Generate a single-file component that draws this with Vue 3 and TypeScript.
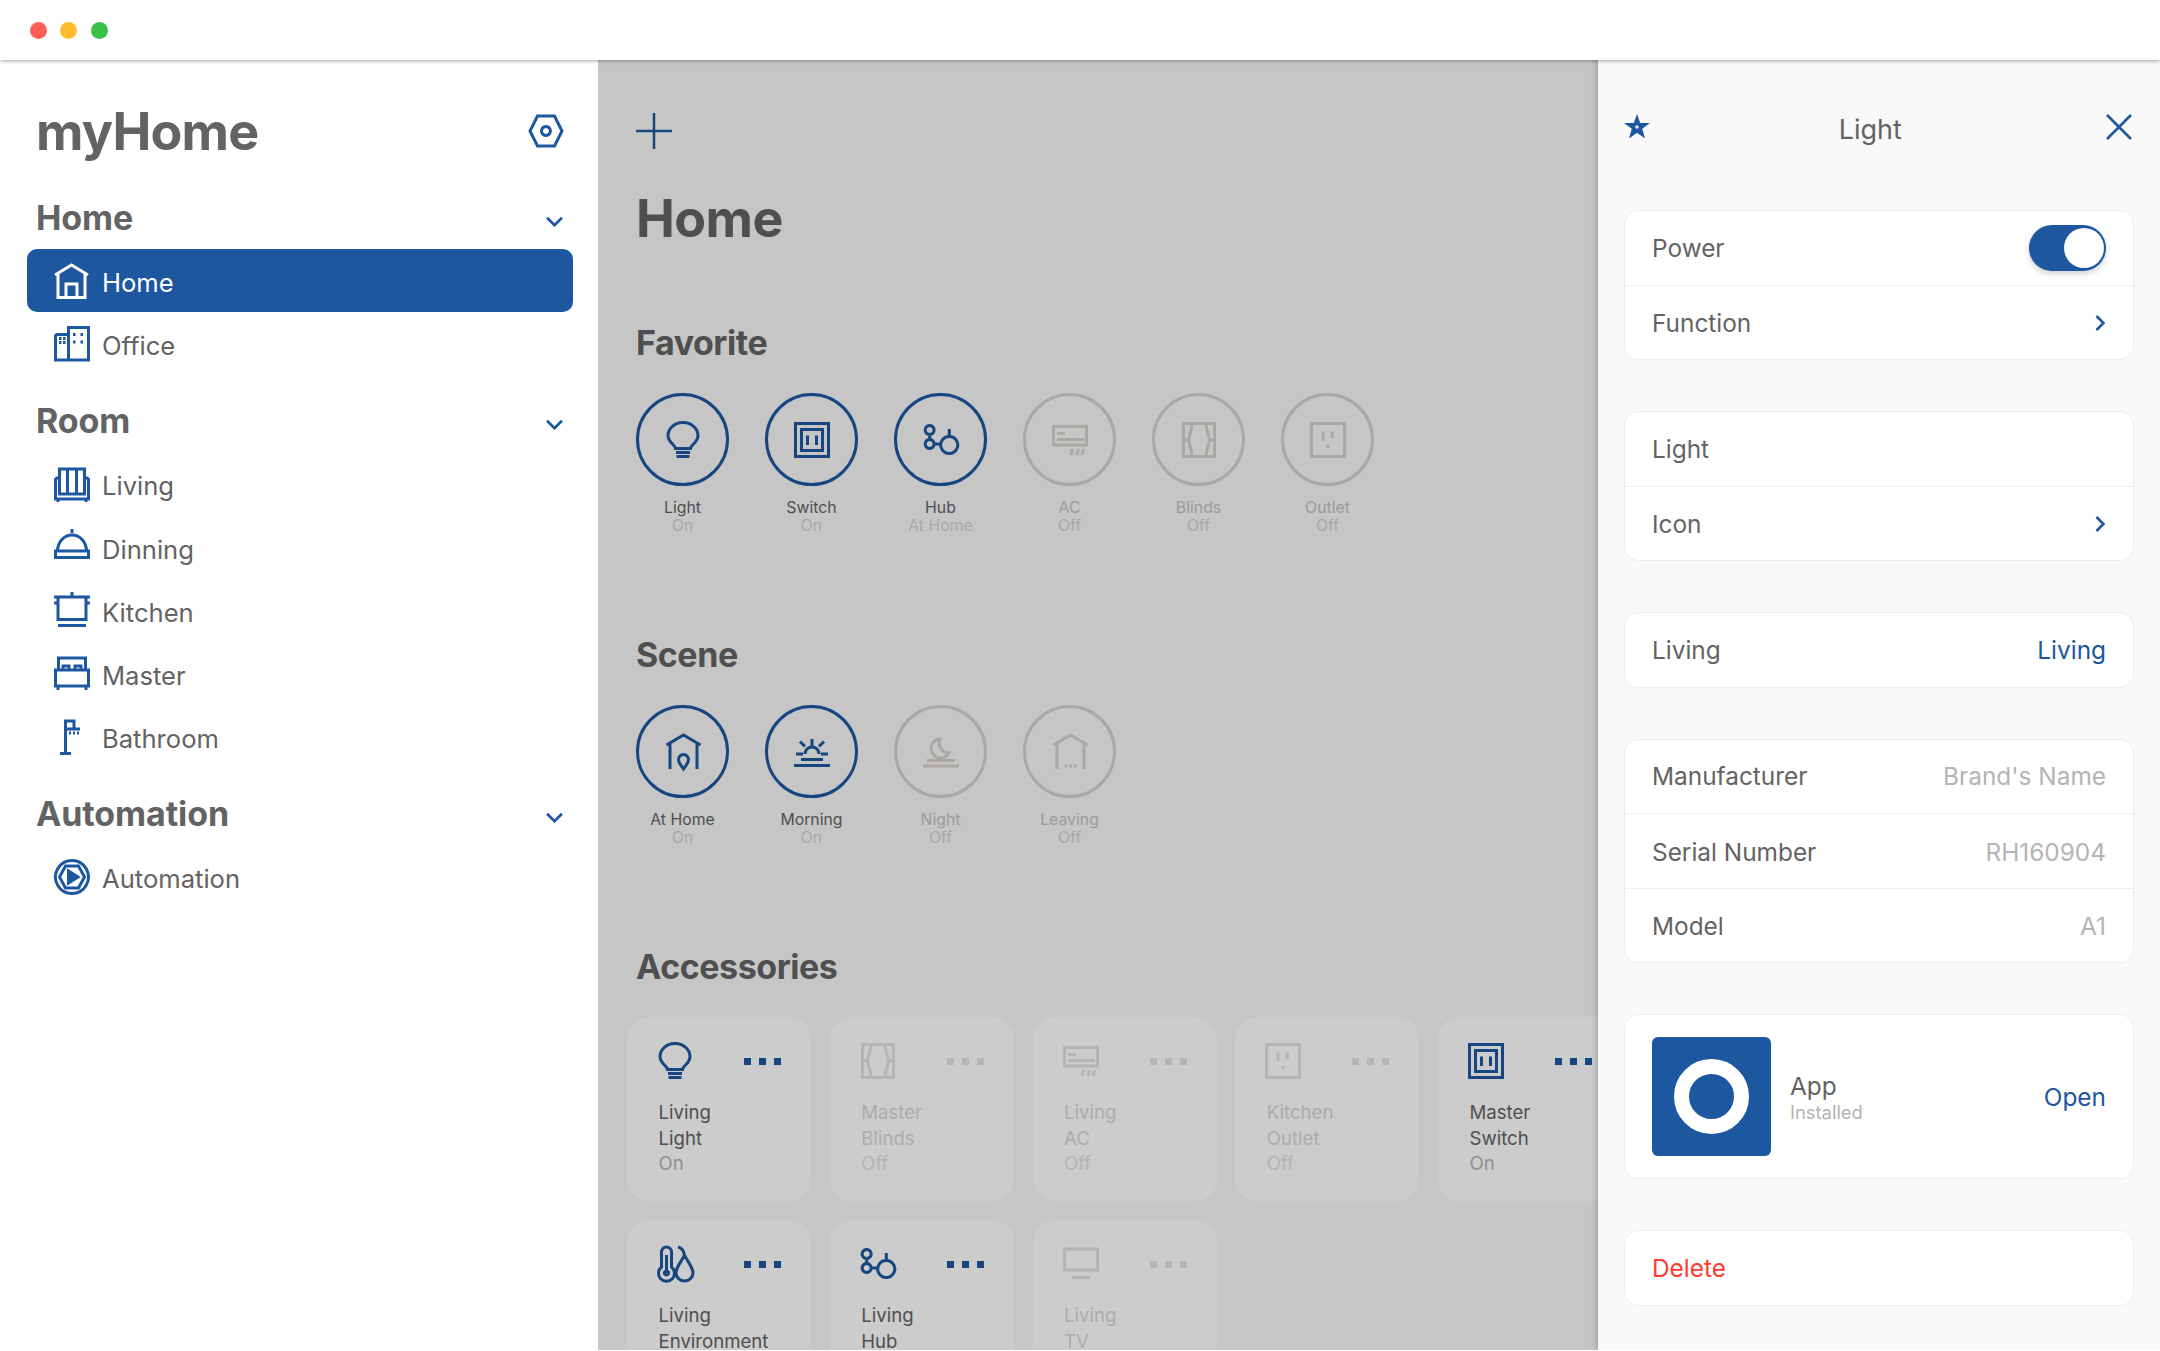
<script setup lang="ts">
import { ref } from 'vue';

// every icon is one stroked path on a 36x36 box
const icons: Record<string, string> = {
  gear: 'M9.5 3H26.5L34 18L26.5 33H9.5L2 18Z M18 13.5A4.5 4.5 0 1 1 17.9 13.5Z',
  home: 'M1 12L17.5 2L34 12 M4 11V34.5H31V11 M12 34.5V21H23V34.5',
  office: 'M1.5 8.5H14.5 M1.5 8.5V34H34.5V1.5H14.5V34 M5 12.5H7.5 M9 12.5H11.5 M5 16.5H7.5 M9 16.5H11.5 M19 8.5H21.5 M26.5 8.5H29 M19 16H21.5 M26.5 16H29',
  living: 'M1.5 12V33H34.5V12 M1.5 12H5.5V28H30.5V12H34.5 M5.5 12V3H30.5V12 M13.5 3V28 M22.5 3V28 M4 33V36 M32 33V36',
  dining: 'M18 0V4 M3.5 22A14.5 16 0 0 1 32.5 22 M1.5 22H34.5V28.5H1.5Z',
  kitchen: 'M18 0V5 M0 5H36 M0 11H3 M33 11H36 M4 5V27.5H32V5 M4 33.5H32',
  master: 'M4.5 14V2H31.5V14 M1.5 14H34.5V30H1.5Z M9 14V10H15V14 M21 14V10H27V14 M4 30V34 M32 30V34',
  bath: 'M6 34.5H17 M11.5 34.5V2H20V10 M13 10H26 M15 14H17 M19 14H21 M23 14H25',
  auto: 'M18 1.5A16.5 16.5 0 1 1 17.9 1.5Z M11.5 7H24.5L30.5 18L24.5 29H11.5L5.5 18Z M14.5 12V24L24 18Z M16 15V21L21 18Z',
  light: 'M10.5 26.5C10 22.5 3 20.5 3 13.5A15 13 0 0 1 33 13.5C33 20.5 26 22.5 25.5 26.5Z M11 30.5H25 M11.5 34.5H24.5',
  switch: 'M1.5 1.5H34.5V34.5H1.5Z M7.5 7.5H28.5V28.5H7.5Z M13.5 13.5V23 M22.5 13.5V23',
  hub: 'M6.7 3.5A4.5 4.5 0 1 1 6.6 3.5Z M6.7 12.5V17.5 M6.7 17.5A4.5 4.5 0 1 1 6.6 17.5Z M11.2 22H17.5 M26.3 14.5A8.5 8.5 0 1 1 26.2 14.5Z M26.3 7V14.5',
  ac: 'M1.5 4.5H34.5V23H1.5Z M5 11.5H13 M5 17.5H32 M19 33L20.5 27 M25 33L26.5 27 M30 33L31.5 27',
  blinds: 'M2.5 1.5H33.5V34.5H2.5Z M11 1.5C11 8 7.5 14 7.5 18C7.5 22 11 28 11 34.5 M25 1.5C25 8 28.5 14 28.5 18C28.5 22 25 28 25 34.5 M2.5 18H7.5 M28.5 18H33.5',
  outlet: 'M1.5 1.5H34.5V34.5H1.5Z M13 9.5V18.5 M22.3 9.5V16 M18 23V26',
  tv: 'M1.5 3H34.5V24H1.5Z M9 31.5H27',
  env: 'M4.5 21V6A5 5 0 0 1 14.5 6V21A8 8 0 1 1 4.5 21Z M9.5 9V27 M9.5 25A2 2 0 1 1 9.4 25Z M21 1C25 2 27 6 27.5 9C30 15 36 21 36 27A8.5 8 0 0 1 19 27C19 21 25 15 27.5 9',
  athome: 'M1.5 11L18.5 1L35.5 11 M5 10V35 M32 10V35 M18.5 20.5A5 5 0 0 1 23.5 25.5C23.5 29 20.5 32 18.5 35C16.5 32 13.5 29 13.5 25.5A5 5 0 0 1 18.5 20.5Z',
  morning: 'M18 5V12 M6 7.5L11 12.5 M30 7.5L25 12.5 M2 20H9 M27 20H34 M11 20A7 7 0 0 1 25 20 M7 25.5H29 M0 31.5H36',
  night: 'M17 5A9.5 9.5 0 1 0 26 19A10 10 0 0 1 17 5Z M4 26.5H32 M0 32H36',
  leaving: 'M1.5 11L18.5 1L35.5 11 M5 10V35 M32 10V35 M13 32H15.5 M17.5 32H20 M22 32H24.5',
};

type Item = { icon: string; label: string; active?: boolean };

const homes: Item[] = [
  { icon: 'home', label: 'Home', active: true },
  { icon: 'office', label: 'Office' },
];
const rooms: Item[] = [
  { icon: 'living', label: 'Living' },
  { icon: 'dining', label: 'Dinning' },
  { icon: 'kitchen', label: 'Kitchen' },
  { icon: 'master', label: 'Master' },
  { icon: 'bath', label: 'Bathroom' },
];

const groups = [
  { title: 'Home', items: homes },
  { title: 'Room', items: rooms },
  { title: 'Automation', items: [{ icon: 'auto', label: 'Automation' }] as Item[] },
];

const favorites = [
  { icon: 'light', name: 'Light', state: 'On', on: true },
  { icon: 'switch', name: 'Switch', state: 'On', on: true },
  { icon: 'hub', name: 'Hub', state: 'At Home', on: true },
  { icon: 'ac', name: 'AC', state: 'Off', on: false },
  { icon: 'blinds', name: 'Blinds', state: 'Off', on: false },
  { icon: 'outlet', name: 'Outlet', state: 'Off', on: false },
];
const scenes = [
  { icon: 'athome', name: 'At Home', state: 'On', on: true },
  { icon: 'morning', name: 'Morning', state: 'On', on: true },
  { icon: 'night', name: 'Night', state: 'Off', on: false },
  { icon: 'leaving', name: 'Leaving', state: 'Off', on: false },
];
const accessories = [
  { icon: 'light', room: 'Living', name: 'Light', state: 'On', on: true },
  { icon: 'blinds', room: 'Master', name: 'Blinds', state: 'Off', on: false },
  { icon: 'ac', room: 'Living', name: 'AC', state: 'Off', on: false },
  { icon: 'outlet', room: 'Kitchen', name: 'Outlet', state: 'Off', on: false },
  { icon: 'switch', room: 'Master', name: 'Switch', state: 'On', on: true },
  { icon: 'env', room: 'Living', name: 'Environment', state: 'On', on: true },
  { icon: 'hub', room: 'Living', name: 'Hub', state: 'On', on: true },
  { icon: 'tv', room: 'Living', name: 'TV', state: 'Off', on: false },
];

const powered = ref(true);
</script>

<template>
  <div class="window">
    <header class="titlebar">
      <span class="dot red"></span>
      <span class="dot yellow"></span>
      <span class="dot green"></span>
    </header>

    <div class="content">
      <aside class="sidebar">
        <div class="brand">
          <h1>myHome</h1>
          <svg class="gear" viewBox="0 0 36 36"><path :d="icons.gear" /></svg>
        </div>
        <section v-for="group in groups" :key="group.title" class="group">
          <div class="group-head">
            <h2>{{ group.title }}</h2>
            <svg class="chev" viewBox="0 0 16 10"><path d="M1 1.5L8 8.5L15 1.5" /></svg>
          </div>
          <ul>
            <li v-for="item in group.items" :key="item.label" :class="{ active: item.active }">
              <svg class="icon" viewBox="0 0 36 36"><path :d="icons[item.icon]" /></svg>
              <span>{{ item.label }}</span>
            </li>
          </ul>
        </section>
      </aside>

      <main class="main">
        <svg class="plus" viewBox="0 0 36 36"><path d="M18 0V36 M0 18H36" /></svg>
        <h1>Home</h1>

        <h2 class="fav-title">Favorite</h2>
        <div class="rounds">
          <div v-for="f in favorites" :key="f.name" class="round-item" :class="{ off: !f.on }">
            <div class="round">
              <svg class="icon" viewBox="0 0 36 36"><path :d="icons[f.icon]" /></svg>
            </div>
            <div class="round-name">{{ f.name }}</div>
            <div class="round-state">{{ f.state }}</div>
          </div>
        </div>

        <h2>Scene</h2>
        <div class="rounds">
          <div v-for="s in scenes" :key="s.name" class="round-item" :class="{ off: !s.on }">
            <div class="round">
              <svg class="icon" viewBox="0 0 36 36"><path :d="icons[s.icon]" /></svg>
            </div>
            <div class="round-name">{{ s.name }}</div>
            <div class="round-state">{{ s.state }}</div>
          </div>
        </div>

        <h2>Accessories</h2>
        <div class="cards">
          <div v-for="a in accessories" :key="a.room + a.name" class="card" :class="{ off: !a.on }">
            <div class="card-top">
              <svg class="icon" viewBox="0 0 36 36"><path :d="icons[a.icon]" /></svg>
              <div class="more"><i></i><i></i><i></i></div>
            </div>
            <div class="card-name">{{ a.room }}<br />{{ a.name }}</div>
            <div class="card-state">{{ a.state }}</div>
          </div>
        </div>
        <div class="scrim"></div>
      </main>

      <aside class="panel">
        <div class="panel-head">
          <svg class="star" viewBox="0 0 26 25">
            <path d="M13 0L16.2 8.9H26L18.2 14.7L21 24.5L13 18.8L5 24.5L7.8 14.7L0 8.9H9.8Z" />
            <circle cx="13" cy="13" r="1.8" />
          </svg>
          <span>Light</span>
          <svg class="close" viewBox="0 0 26 26"><path d="M1 1L25 25 M25 1L1 25" /></svg>
        </div>

        <div class="box">
          <div class="row">
            <span>Power</span>
            <div class="toggle" :class="{ on: powered }"><b></b></div>
          </div>
          <div class="row">
            <span>Function</span>
            <svg class="arrow" viewBox="0 0 10 16"><path d="M1.5 1L8.5 8L1.5 15" /></svg>
          </div>
        </div>

        <div class="box">
          <div class="row"><span>Light</span></div>
          <div class="row">
            <span>Icon</span>
            <svg class="arrow" viewBox="0 0 10 16"><path d="M1.5 1L8.5 8L1.5 15" /></svg>
          </div>
        </div>

        <div class="box">
          <div class="row"><span>Living</span><em class="link">Living</em></div>
        </div>

        <div class="box">
          <div class="row"><span>Manufacturer</span><em>Brand's Name</em></div>
          <div class="row"><span>Serial Number</span><em>RH160904</em></div>
          <div class="row"><span>Model</span><em>A1</em></div>
        </div>

        <div class="box app">
          <div class="app-icon"><div class="app-ring"></div></div>
          <div class="app-text">
            <div class="app-name">App</div>
            <div class="app-state">Installed</div>
          </div>
          <em class="link">Open</em>
        </div>

        <div class="box">
          <div class="row delete"><span>Delete</span></div>
        </div>
      </aside>
    </div>
  </div>
</template>

<style>
html,
body {
  background: #fff;
}
</style>

<style scoped>
.window {
  height: 1350px;
  display: flex;
  flex-direction: column;
  font-family: Inter, 'Noto Sans', sans-serif;
  color: #636363;
  overflow: hidden;
}

svg path {
  fill: none;
  stroke-linejoin: miter;
}

.titlebar {
  height: 60px;
  flex: none;
  display: flex;
  align-items: center;
  gap: 13.4px;
  padding-left: 30px;
  background: #fff;
  box-shadow: 0 1px 4px rgba(0, 0, 0, 0.35);
  position: relative;
  z-index: 3;
}

.dot {
  width: 17px;
  height: 17px;
  border-radius: 50%;
}
.red { background: #ff5f57; }
.yellow { background: #febc2e; }
.green { background: #38c149; }

.content {
  flex: 1;
  display: flex;
  min-height: 0;
}

/* sidebar */
.sidebar {
  width: 598px;
  flex: none;
  padding: 35px 25px 0 27px;
  box-sizing: border-box;
  background: #fff;
}

.brand {
  display: flex;
  align-items: center;
  justify-content: space-between;
  height: 72px;
  padding: 0 9px;
  margin-bottom: 29px;
}

.brand h1 {
  margin: 0;
  font-size: 52px;
  font-weight: 700;
  letter-spacing: -0.8px;
}

.gear {
  width: 36px;
  height: 36px;
}
.gear path {
  stroke: #1c57a0;
  stroke-width: 3;
}

.group + .group {
  margin-top: 24px;
}

.group-head {
  display: flex;
  align-items: center;
  justify-content: space-between;
  height: 44px;
  padding: 0 10px 0 9px;
  margin-bottom: 9px;
}

.group-head h2 {
  margin: -2px 0 0;
  font-size: 34px;
  font-weight: 700;
  letter-spacing: -0.1px;
}

.chev {
  width: 17px;
  height: 11px;
  margin-top: 6px;
}
.chev path {
  stroke: #1c57a0;
  stroke-width: 2.5;
}

ul {
  list-style: none;
  margin: 0;
  padding: 0;
}

li {
  height: 63.2px;
  display: flex;
  align-items: center;
  gap: 12px;
  padding-left: 27px;
  font-size: 25.6px;
  border-radius: 10px;
}

li span {
  margin-top: 4px;
}

li .icon path {
  stroke: #1c57a0;
}

li.active {
  background: #1c57a0;
  color: #fff;
}
li.active .icon path {
  stroke: #fff;
}

.icon {
  width: 36px;
  height: 36px;
  flex: none;
  overflow: visible;
}
.icon path {
  stroke-width: 3;
}

/* main, sits under the scrim of the open panel */
.main {
  flex: 1;
  min-width: 0;
  position: relative;
  overflow: hidden;
  padding: 53px 0 0 38px;
  background: #f8f8f8;
  color: #636363;
}

.plus {
  display: block;
  width: 36px;
  height: 36px;
}
.plus path {
  stroke: #1c57a0;
  stroke-width: 2.5;
}

.main h1 {
  margin: 45px 0 0;
  height: 50px;
  line-height: 50px;
  font-size: 52px;
  font-weight: 700;
  letter-spacing: -0.6px;
}

.main h2 {
  margin: 104px 0 34px;
  height: 32px;
  line-height: 32px;
  font-size: 34px;
  font-weight: 700;
  letter-spacing: -0.45px;
}

.main h2.fav-title {
  margin-top: 83px;
}

.rounds {
  display: flex;
  gap: 36px;
}

.round-item {
  width: 93px;
  text-align: center;
  white-space: nowrap;
  font-size: 15.8px;
  line-height: 18px;
}

.round {
  width: 93px;
  height: 93px;
  box-sizing: border-box;
  border: 3px solid #1c57a0;
  border-radius: 50%;
  display: flex;
  align-items: center;
  justify-content: center;
  margin-bottom: 13px;
}

.round .icon path {
  stroke: #1c57a0;
}

.round-state {
  color: #d2d2d2;
}

.round-item.off .round {
  border-color: #d6d2ce;
}
.round-item.off .icon path {
  stroke: #d6d2ce;
}
.round-item.off .round-name {
  color: #c2c2c2;
}

.cards {
  display: grid;
  grid-template-columns: repeat(5, 184px);
  grid-auto-rows: 184px;
  column-gap: 18.75px;
  row-gap: 19px;
  margin-left: -9px;
}

.card {
  background: #fff;
  border-radius: 22px;
  padding: 26px 0 0 30px;
  box-sizing: border-box;
}

.card-top {
  display: flex;
  align-items: center;
  justify-content: space-between;
  padding-right: 30px;
  height: 36px;
}

.card .icon path {
  stroke: #1c57a0;
}

.more {
  display: flex;
  gap: 8px;
}
.more i {
  width: 7px;
  height: 7px;
  background: #1c57a0;
}

.card-name,
.card-state {
  padding-left: 1.5px;
  font-size: 18.6px;
  line-height: 25.5px;
}

.card-name {
  margin-top: 21px;
}

.card-state {
  color: #b4b4b4;
}

.card.off .icon path {
  stroke: #e3e3e3;
}
.card.off .more i {
  background: #e3e3e3;
}
.card.off .card-name {
  color: #d8d8d8;
}
.card.off .card-state {
  color: #e3e3e3;
}

.scrim {
  position: absolute;
  inset: 0;
  background: rgba(0, 0, 0, 0.2);
}

/* detail panel */
.panel {
  width: 562px;
  flex: none;
  box-sizing: border-box;
  padding: 38px 26px 0;
  background: #f9f9f9;
  box-shadow: -2px 0 6px rgba(0, 0, 0, 0.2);
  position: relative;
  z-index: 2;
}

.panel-head {
  height: 60px;
  display: flex;
  align-items: center;
  justify-content: space-between;
  font-size: 27px;
  margin-bottom: 52px;
}

.panel-head span {
  margin: 2px 16px 0 0;
}

.star {
  width: 26px;
  height: 25px;
  margin-top: -3px;
}
.star path,
.star circle {
  fill: #1c57a0;
  stroke: none;
}
.star circle {
  fill: #dfe8f2;
}

.close {
  width: 26px;
  height: 26px;
  margin: -3px 1.5px 0 0;
}
.close path {
  stroke: #1c57a0;
  stroke-width: 2.6;
}

.box {
  background: #fff;
  border: 1px solid #eeeeee;
  border-radius: 14px;
  margin-bottom: 51px;
}

.row {
  height: 73.5px;
  display: flex;
  align-items: center;
  justify-content: space-between;
  padding: 0 27px;
  font-size: 24.4px;
}

.row + .row {
  border-top: 1px solid #eeeeee;
}

.row + .row span,
.row + .row em {
  margin-top: 2px;
}

em {
  font-style: normal;
  color: #b4b4b4;
}
em.link {
  color: #1c57a0;
}

.toggle {
  width: 77px;
  height: 46px;
  border-radius: 23px;
  background: #1c57a0;
  position: relative;
  box-shadow: 0 3px 6px rgba(0, 0, 0, 0.18);
}
.toggle b {
  position: absolute;
  top: 3px;
  right: 2px;
  width: 40px;
  height: 40px;
  border-radius: 50%;
  background: #fff;
}

.arrow {
  width: 10px;
  height: 16px;
  margin: 2px 1px 0 0;
}
.arrow path {
  stroke: #1c57a0;
  stroke-width: 2.6;
}

.app {
  height: 163px;
  display: flex;
  align-items: center;
  padding: 0 27px;
}

.app-icon {
  width: 119px;
  height: 119px;
  border-radius: 6px;
  background: #1c57a0;
  display: flex;
  align-items: center;
  justify-content: center;
  flex: none;
}

.app-ring {
  width: 75px;
  height: 75px;
  box-sizing: border-box;
  border: 15px solid #fff;
  border-radius: 50%;
}

.app-text {
  flex: 1;
  margin-left: 19px;
}

.app-name {
  font-size: 24.4px;
  line-height: 30px;
}

.app-state {
  font-size: 18.4px;
  line-height: 22px;
  color: #b4b4b4;
}

.app em {
  font-size: 24.4px;
}

.delete {
  color: #ff3b30;
}
</style>
